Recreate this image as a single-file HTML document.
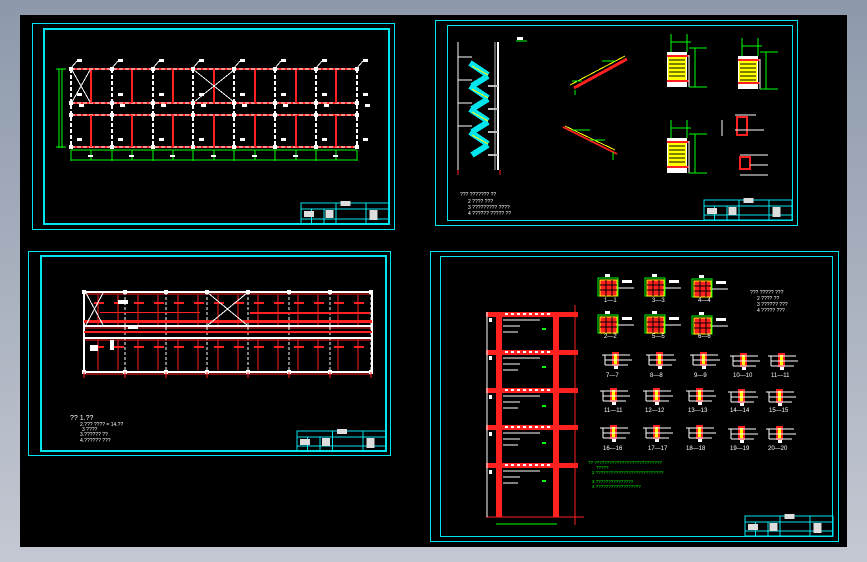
<!DOCTYPE html>
<html><head><meta charset="utf-8"><style>
html,body{margin:0;padding:0;width:867px;height:562px;overflow:hidden;background:linear-gradient(#8d99ab,#c4c8d2);}
svg{position:absolute;left:0;top:0}
text{font-family:"Liberation Sans","Noto Sans CJK SC",sans-serif;}
</style></head><body>
<svg id="s" width="867" height="562" xmlns="http://www.w3.org/2000/svg" shape-rendering="crispEdges">
<rect x="20" y="15" width="827" height="532" fill="#000"/>
<g fill="none" stroke="#00e5ee">
<rect x="32.5" y="23.5" width="362" height="206" stroke-width="1"/>
<rect x="44" y="29" width="345" height="195" stroke-width="2"/>
<rect x="435.5" y="20.5" width="362" height="205" stroke-width="1"/>
<rect x="447.5" y="25.5" width="345" height="195" stroke-width="1"/>
<rect x="28.5" y="251.5" width="362" height="204" stroke-width="1"/>
<rect x="41" y="256" width="345" height="195" stroke-width="2"/>
<rect x="430.5" y="251.5" width="408" height="290" stroke-width="1"/>
<rect x="440.5" y="256.5" width="392" height="280" stroke-width="1"/>
</g>
<g id="dyn"></g>
<g fill="#fff" font-size="5">
<text x="460" y="196">??? ??????? ??</text><text x="468" y="203">2 ???? ???</text><text x="468" y="209">3 ????????? ????</text><text x="468" y="215">4 ?????? ????? ??</text>
<text x="70" y="420" font-size="7">?? 1.??</text><text x="80" y="426">2.??? ???? = 14.??</text><text x="82" y="431">3 ????</text><text x="80" y="436">3.?????? ??</text><text x="80" y="442">4.?????? ???</text>
<text x="750" y="294">??? ????? ???</text><text x="757" y="300">2 ???? ??</text><text x="757" y="306">3 ?????? ???</text><text x="757" y="312">4 ????? ???</text>
</g>
<g fill="#00ff00" font-size="4.5">
<text x="588" y="464">?? ???????????????????????????</text><text x="596" y="469">?????</text>
<text x="592" y="474">2 ???????????????????????????</text>
<text x="592" y="483">3 ???????????????</text><text x="592" y="488">4 ??????????????????</text>
</g>
<g fill="#fff" font-size="6">
<text x="604" y="302">1—1</text><text x="652" y="302">3—3</text><text x="698" y="302">4—4</text>
<text x="604" y="338">2—2</text><text x="652" y="338">5—5</text><text x="698" y="338">6—6</text>
<text x="606" y="377">7—7</text><text x="650" y="377">8—8</text><text x="694" y="377">9—9</text><text x="733" y="377">10—10</text><text x="771" y="377">11—11</text>
<text x="604" y="412">11—11</text><text x="645" y="412">12—12</text><text x="688" y="412">13—13</text><text x="730" y="412">14—14</text><text x="769" y="412">15—15</text>
<text x="603" y="450">16—16</text><text x="648" y="450">17—17</text><text x="686" y="450">18—18</text><text x="730" y="450">19—19</text><text x="768" y="450">20—20</text>
</g>
</svg>
<script>
var g=document.getElementById('dyn'),h='';
function L(x1,y1,x2,y2,c,w,d){h+='<line x1="'+x1+'" y1="'+y1+'" x2="'+x2+'" y2="'+y2+'" stroke="'+c+'" stroke-width="'+(w||1)+'"'+(d?' stroke-dasharray="'+d+'"':'')+'/>';}
function R(x,y,w,hh,c,f,sw){h+='<rect x="'+x+'" y="'+y+'" width="'+w+'" height="'+hh+'" '+(f?'fill="'+c+'"':'fill="none" stroke="'+c+'" stroke-width="'+(sw||1)+'"')+'/>';}
function TB(x,y,w,hh){R(x,y,w,hh,'#00e5ee',0);L(x,y+6,x+w,y+6,'#00e5ee');L(x,y+hh-5,x+w,y+hh-5,'#00e5ee');L(x+w*0.4,y,x+w*0.4,y+hh,'#00e5ee');L(x+w*0.74,y,x+w*0.74,y+hh,'#00e5ee');L(x+w*0.12,y+6,x+w*0.12,y+hh,'#00e5ee');L(x+w*0.26,y+6,x+w*0.26,y+hh,'#00e5ee');R(x+3,y+8,10,6,'#ddd',1);R(x+w*0.28,y+7,8,8,'#ddd',1);R(x+w*0.78,y+7,8,10,'#ddd',1);R(x+w*0.45,y-2,10,5,'#ddd',1);}
TB(301,203,88,21);TB(704,200,88,20);TB(297,431,89,20);TB(745,516,88,20);
var cx=[71,112,153,193,234,275,316,357];
[69,103,115,147].forEach(function(y){L(71,y,357,y,'#ff2020',2);L(71,y,357,y,'#fff',1,'4 2');});
cx.forEach(function(x){L(x,69,x,147,'#fff',2,'4 2');});
[91,132,173,214,255,296,336].forEach(function(x){L(x,70,x,103,'#ff2020',2);L(x,115,x,147,'#ff2020',2);});
cx.forEach(function(x){[69,103,115,147].forEach(function(y){R(x-2,y-2,4,4,'#fff',1);});R(x+6,59,5,3,'#fff',1);L(x,68,x+6,61,'#fff');R(x+6,93,5,3,'#fff',1);R(x+6,138,5,3,'#fff',1);R(x+8,104,5,3,'#fff',1);});
L(72,70,90,102,'#fff');L(90,70,72,102,'#fff');L(194,70,234,102,'#fff');L(234,70,194,102,'#fff');
L(71,150,357,150,'#00ff00');L(71,160,357,160,'#00ff00');cx.forEach(function(x){L(x,150,x,161,'#00ff00');});
[91,132,173,214,255,296,336].forEach(function(x){L(x,150,x,160,'#00ff00');R(x-3,155,5,2,'#fff',1);});
L(56,69,66,69,'#00ff00');L(56,147,66,147,'#00ff00');L(59,69,59,148,'#00ff00');L(62,69,62,148,'#00ff00');
[292,326,338,372].forEach(function(y){L(84,y,372,y,'#fff',2);L(84,y+2,372,y+2,'#ff2020',1);});
for(var i=0;i<8;i++){var x=84+i*41;L(x,292,x,372,'#fff',1,'3 2');R(x-2,290,4,4,'#fff',1);R(x-2,370,4,4,'#fff',1);L(x,372,x,378,'#ff2020');}
L(84,292,84,372,'#fff',2);L(372,292,372,372,'#fff',2);
for(var x=98;x<370;x+=20){L(x,295,x,325,'#ff2020',1);L(x,340,x,370,'#ff2020',1);R(x-4,302,10,2,'#ff2020',1);R(x-4,346,10,2,'#ff2020',1);}
R(84,320,288,3,'#ff2020',1);R(84,331,288,2,'#ff2020',1);R(250,312,120,2,'#ff2020',1);R(100,312,100,1,'#ff2020',1);
L(86,293,103,325,'#fff');L(103,293,86,325,'#fff');L(208,293,247,325,'#fff');L(247,293,208,325,'#fff');
R(118,300,10,4,'#fff',1);R(128,325,10,4,'#fff',1);R(90,345,8,6,'#fff',1);R(110,340,4,10,'#fff',1);
L(458,42,458,170,'#fff');L(498,42,498,170,'#fff',2);L(495,42,495,170,'#bbb');
for(var k=0;k<4;k++){var y=63+k*23;L(470,y,488,y+12,'#00e5ee',6);L(488,y+13,472,y+23,'#00e5ee',6);L(472,y+3,488,y+12,'#ffff00',1);L(458,y-6,472,y-6,'#fff');L(488,y+23,498,y+23,'#bbb',2);}
L(458,170,458,175,'#ff2020');L(500,170,500,175,'#ff2020');R(517,37,6,3,'#fff',1);L(516,41,527,41,'#00ff00');
L(574,88,627,59,'#ff2020',3);L(570,85,625,56,'#ffff00',1);L(572,81,582,81,'#00ff00');L(602,61,615,61,'#00ff00');L(575,90,575,95,'#00ff00');
L(563,127,617,154,'#ff2020',2);L(565,126,615,150,'#ffff00',1);L(572,130,590,130,'#00ff00');L(590,140,605,140,'#00ff00');L(613,152,613,160,'#00ff00');
function panel(x,y,hh){R(x,y,20,hh,'#fff',1);R(x+1,y+5,18,hh-12,'#ffff00',1);for(var j=y+8;j<y+hh-8;j+=4)L(x+2,j,x+18,j,'#000',1);L(x,y+4,x+22,y+4,'#ff2020',2);L(x,y+hh-6,x+22,y+hh-6,'#ff2020',2);L(x+22,y+3,x+22,y+hh,'#fff');L(x+28,y-4,x+28,y+hh,'#00ff00');L(x+22,y+hh,x+40,y+hh,'#00ff00');L(x+22,y-4,x+40,y-4,'#00ff00');L(x+4,y-10,x+24,y-10,'#00ff00');L(x+4,y-18,x+4,y,'#00ff00');L(x+20,y-18,x+20,y,'#00ff00');}
panel(667,52,35);panel(738,56,33);panel(667,138,35);
R(737,117,10,18,'#ff2020',0,2);L(735,115,756,115,'#fff');L(735,130,764,130,'#fff');L(722,120,722,136,'#fff');
R(740,157,10,12,'#ff2020',0,2);L(740,155,768,155,'#fff');L(750,165,768,165,'#fff');L(740,175,768,175,'#fff');
R(496,312,6,205,'#ff2020',1);R(553,312,6,205,'#ff2020',1);
[312,350,388,425,463].forEach(function(y){R(486,y,92,5,'#ff2020',1);for(var x=505;x<550;x+=6)R(x,y+1,3,2,'#fff',1);L(503,y+8,540,y+8,'#fff');L(503,y+14,520,y+14,'#fff');L(503,y+20,518,y+20,'#fff');});
L(486,517,584,517,'#ff2020');L(575,305,575,525,'#ff2020');L(487,312,487,517,'#fff');L(496,524,557,524,'#00ff00');
[318,356,395,432,470].forEach(function(y){R(489,y,3,4,'#fff',1);R(542,y+10,4,2,'#00ff00',1);});
function sec(x,y){R(x,y,20,18,'#00ff00',0,1);R(x+2,y+2,17,16,'#ff2020',1);R(x+2,y+2,17,16,'#ffff00',0,1);for(var a=1;a<3;a++){L(x+2+a*6,y+2,x+2+a*6,y+18,'#000');L(x+2,y+2+a*5,x+19,y+2+a*5,'#000');}R(x+7,y-4,5,3,'#fff',1);R(x+24,y+2,10,3,'#fff',1);L(x+20,y+10,x+36,y+10,'#fff');}
[[598,278],[645,278],[692,279],[598,315],[645,315],[692,316]].forEach(function(p){sec(p[0],p[1]);});
function sm(x,y){R(x+10,y,7,14,'#ff2020',1);R(x+12,y+2,3,10,'#ffff00',1);L(x,y+3,x+28,y+3,'#fff');L(x+3,y+8,x+30,y+8,'#fff');L(x+3,y+13,x+26,y+13,'#fff');L(x+3,y+3,x+3,y+13,'#fff');R(x+12,y+14,4,3,'#fff',1);}
[[602,352],[646,352],[690,352],[730,353],[768,353],[600,388],[643,388],[686,388],[728,389],[766,389],[600,425],[643,425],[686,425],[728,426],[766,426]].forEach(function(p){sm(p[0],p[1]);});
g.innerHTML=h;
</script>
</body></html>
